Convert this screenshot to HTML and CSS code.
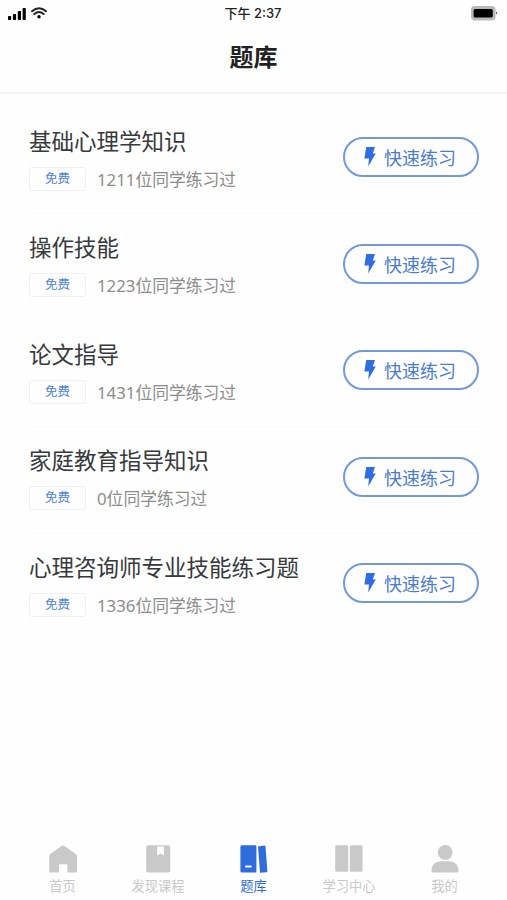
FILE: index.html
```html
<!DOCTYPE html>
<html lang="zh-CN">
<head>
<meta charset="utf-8">
<title>题库</title>
<link rel="stylesheet" href="styles.css">
</head>
<body>
<svg class="defs" width="0" height="0" aria-hidden="true">
  <symbol id="bolt" viewBox="0 0 12 20"><path d="M2.2 0H11L8.8 6.4H11.8L4.2 19.6L5 11.6H.4Z"/></symbol>
</svg>
<div class="status">
  <div class="signals">
    <svg width="19" height="13" viewBox="0 0 19 13"><rect x="0" y="9" width="3.2" height="4" rx=".8"/><rect x="4.9" y="7" width="3.2" height="6" rx=".8"/><rect x="9.8" y="4" width="3.2" height="9" rx=".8"/><rect x="14.6" y="1" width="3.2" height="12" rx=".8"/></svg>
    <svg class="wifi" width="16" height="12" viewBox="0 0 16 12"><path d="M1 4.2Q8-1.8 15 4.2M3.4 7Q8 3.1 12.6 7"/><circle cx="8" cy="9.7" r="1.7"/></svg>
  </div>
  <span class="time">下午 2:37</span>
  <svg class="battery" width="27" height="15" viewBox="0 0 27 15"><rect class="shell" x="0" y="0" width="24.6" height="14.4" rx="4"/><rect x="2.6" y="3" width="19.2" height="8.6" rx="1.6"/><path d="M25.2 5.6Q27 7.2 25.2 8.8Z"/></svg>
</div>
<header class="header"><h1>题库</h1></header>
<main class="list">
  <section class="row">
    <div class="info"><h2>基础心理学知识</h2><div class="meta"><span class="tag">免费</span><span class="count">1211位同学练习过</span></div></div>
    <button class="practice"><svg width="12" height="20"><use href="#bolt"/></svg>快速练习</button>
  </section>
  <section class="row plain">
    <div class="info"><h2>操作技能</h2><div class="meta"><span class="tag">免费</span><span class="count">1223位同学练习过</span></div></div>
    <button class="practice"><svg width="12" height="20"><use href="#bolt"/></svg>快速练习</button>
  </section>
  <section class="row">
    <div class="info"><h2>论文指导</h2><div class="meta"><span class="tag">免费</span><span class="count">1431位同学练习过</span></div></div>
    <button class="practice"><svg width="12" height="20"><use href="#bolt"/></svg>快速练习</button>
  </section>
  <section class="row">
    <div class="info"><h2>家庭教育指导知识</h2><div class="meta"><span class="tag">免费</span><span class="count">0位同学练习过</span></div></div>
    <button class="practice"><svg width="12" height="20"><use href="#bolt"/></svg>快速练习</button>
  </section>
  <section class="row plain">
    <div class="info"><h2>心理咨询师专业技能练习题</h2><div class="meta"><span class="tag">免费</span><span class="count">1336位同学练习过</span></div></div>
    <button class="practice"><svg width="12" height="20"><use href="#bolt"/></svg>快速练习</button>
  </section>
</main>
<nav class="tabs">
  <a class="tab"><svg width="28" height="28" viewBox="0 0 28 28"><path d="M12.6.9Q14 0 15.4.9L26.8 9Q28 9.8 28 11.2V26Q28 27.6 26.4 27.6H18.4V20.2Q18.4 19.2 17.4 19.2H11Q10 19.2 10 20.2V27.6H1.8Q.2 27.6.2 26V11.2Q.2 9.8 1.4 9Z"/></svg><span>首页</span></a>
  <a class="tab"><svg width="28" height="28" viewBox="0 0 28 28"><path fill-rule="evenodd" d="M4.2.2H24.2Q26.2.2 26.2 2.2V25.6Q26.2 27.6 24.2 27.6H4.2Q2.2 27.6 2.2 25.6V2.2Q2.2.2 4.2.2ZM13.2 1.6V10.6L16.5 8.4L19.8 10.6V1.6Z"/></svg><span>发现课程</span></a>
  <a class="tab active"><svg width="28" height="28" viewBox="0 0 28 28"><path fill-rule="evenodd" d="M2 .2H15Q16.4.2 16.4 1.6V27.6H2Q.4 27.6.4 26V1.8Q.4.2 2 .2ZM5.2 20.6V22.6H11.6V20.6ZM18 1.4L24.4.4Q25.4.3 25.5 1.3L27.4 26.2Q27.5 27.2 26.5 27.3L20 27.8Z"/></svg><span>题库</span></a>
  <a class="tab"><svg width="28" height="28" viewBox="0 0 28 28"><path d="M1.8.2H11.4Q13.2.2 13.2 2V26.8H1.8Q.2 26.8.2 25.2V1.8Q.2.2 1.8.2ZM16.6.2H26Q27.6.2 27.6 1.8V25.2Q27.6 26.8 26 26.8H14.8V2Q14.8.2 16.6.2Z"/></svg><span>学习中心</span></a>
  <a class="tab"><svg width="28" height="28" viewBox="0 0 28 28"><circle cx="14.2" cy="7.4" r="7.4"/><path d="M.4 25.8C.8 19.6 4.4 16.2 10 16.2H18C23.6 16.2 27.2 19.6 27.6 25.8Q27.6 27.6 26 27.6H2Q.4 27.6.4 25.8Z"/></svg><span>我的</span></a>
</nav>
</body>
</html>
```
FILE: styles.css
```css
* { box-sizing: border-box; }
body {
  margin: 0;
  height: 900px;
  display: flex;
  flex-direction: column;
  overflow: hidden;
  background: #fefefe;
  color: #222;
  font-family: "Noto Sans CJK SC", sans-serif;
}
h1, h2 { margin: 0; }
svg { display: block; flex: none; }
.defs { position: absolute; }
.status {
  height: 26px;
  padding: 0 9px 0 8px;
  display: grid;
  grid-template-columns: 1fr auto 1fr;
  align-items: center;
}
.signals { display: flex; align-items: center; gap: 4px; }
.wifi path { fill: none; stroke: #222; stroke-width: 2; stroke-linecap: round; }
.time { font: 500 13px/26px Inter, "Noto Sans CJK SC", sans-serif; }
.battery { justify-self: end; }
.shell { fill: #b9b9b9; }
.header {
  height: 68px;
  padding-top: 13px;
  border-bottom: 2px solid #f5f5f5;
  text-align: center;
}
h1 { font-size: 24px; line-height: 34px; font-weight: 700; }
.list { flex: 1; padding: 13.5px 28px 0 29px; }
.row {
  height: 106.6px;
  padding-top: 16px;
  display: flex;
  justify-content: space-between;
  align-items: flex-start;
  border-bottom: 1px solid #f9f9f9;
}
.plain { border-bottom-color: transparent; }
h2 { font-size: 22.5px; line-height: 32px; font-weight: 400; color: #37393c; white-space: nowrap; }
.meta { margin-top: 11px; display: flex; align-items: center; gap: 11px; height: 24px; }
.tag {
  width: 57px;
  height: 24px;
  border: 1.5px solid #f0f0f1;
  border-radius: 3px;
  text-align: center;
  font-size: 12.5px;
  line-height: 20px;
  color: #4e83dc;
}
.count { padding-top: 2px; font-family: "Noto Sans", "Noto Sans CJK SC", sans-serif; font-size: 16.8px; line-height: 24px; color: #8c8c8c; }
.practice {
  width: 136px;
  height: 40px;
  margin-top: 13.5px;
  padding: 0 2px 0 0;
  display: flex;
  align-items: center;
  justify-content: center;
  gap: 8px;
  border: 2px solid #7299d9;
  border-radius: 20px;
  background: #fefefe;
  font: 400 18px/36px "Noto Sans CJK SC", sans-serif;
  color: #4b7ccd;
}
.practice svg { fill: #2f6de0; }
.tabs {
  height: 67px;
  padding: 12px 14.75px 0;
  display: flex;
}
.tab {
  flex: 1;
  display: flex;
  flex-direction: column;
  align-items: center;
  color: #c9c9c9;
  font-size: 13.3px;
  line-height: 20px;
}
.tab svg { fill: currentColor; }
.tab span { margin-top: 3px; }
.active { color: #2f6ddd; }
```
